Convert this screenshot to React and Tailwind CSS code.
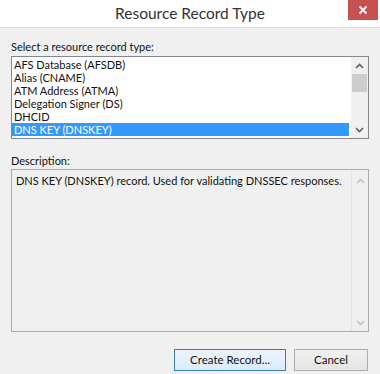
import React, { useState } from "react";

const recordTypes = [
  "AFS Database (AFSDB)",
  "Alias (CNAME)",
  "ATM Address (ATMA)",
  "Delegation Signer (DS)",
  "DHCID",
  "DNS KEY (DNSKEY)",
];

function Chevron({ up, color = "#606060" }) {
  return (
    <svg width="9" height="6" viewBox="0 0 9 6">
      <path
        d={up ? "M1 5 L4.5 1.5 L8 5" : "M1 1 L4.5 4.5 L8 1"}
        fill="none"
        stroke={color}
        strokeWidth="1.6"
      />
    </svg>
  );
}

export default function App() {
  const [selected, setSelected] = useState(5);

  return (
    <div className="w-[380px] h-[374px] bg-[#f0f0f0] text-[11px] text-[#111] font-['Lato',sans-serif] overflow-hidden">
      {/* Title bar */}
      <div className="h-[28px] bg-white border-b border-[#dadada] grid grid-cols-[1fr_auto_1fr]">
        <div />
        <div className="text-[15.5px] text-[#333] leading-[27px]">Resource Record Type</div>
        <div className="flex justify-end pr-[2px]">
          <div className="w-[30px] h-[20px] bg-[#c75050] flex items-center justify-center">
            <svg width="10" height="10" viewBox="0 0 10 10">
              <path d="M1.5 1.5 L8.5 8.5 M8.5 1.5 L1.5 8.5" stroke="#fff" strokeWidth="1.8" />
            </svg>
          </div>
        </div>
      </div>

      {/* Body */}
      <div className="px-[11px] pt-[11px]">
        <div className="leading-[15px] mb-[2px]">Select a resource record type:</div>

        {/* List box */}
        <div className="h-[83px] w-[358px] bg-white border border-[#828790] flex">
          <div className="flex-1 py-px pr-[2px]">
            {recordTypes.map((t, i) => (
              <div
                key={t}
                onClick={() => setSelected(i)}
                className={`h-[13px] leading-[13px] px-[2px] whitespace-nowrap ${
                  i === selected ? "bg-[#3399ff] text-white" : ""
                }`}
              >
                {t}
              </div>
            ))}
          </div>
          <div className="w-[17px] bg-[#f0f0f0] flex flex-col">
            <div className="h-[17px] flex items-center justify-center">
              <Chevron up />
            </div>
            <div className="h-[18px] mx-px bg-[#cdcdcd]" />
            <div className="flex-1" />
            <div className="h-[17px] flex items-center justify-center">
              <Chevron />
            </div>
          </div>
        </div>

        <div className="leading-[15px] mt-[14px] mb-px">Description:</div>

        {/* Description box */}
        <div className="h-[163px] w-[358px] border border-[#acacac] flex">
          <div className="flex-1 pl-[4px] pt-[3px] leading-[15px] whitespace-nowrap">
            DNS KEY (DNSKEY) record. Used for validating DNSSEC responses.
          </div>
          <div className="w-[17px] border-l border-[#e3e3e3] flex flex-col justify-between">
            <div className="h-[17px] flex items-center justify-center mt-[2px]">
              <Chevron up color="#c2c2c2" />
            </div>
            <div className="h-[17px] flex items-center justify-center">
              <Chevron color="#c2c2c2" />
            </div>
          </div>
        </div>

        {/* Buttons */}
        <div className="flex justify-end gap-[8px] mt-[17px] mr-px">
          <button className="w-[112px] h-[22px] border border-[#3c7fb1] bg-gradient-to-b from-[#ecf4fc] to-[#dcecfc] text-[11.5px] leading-[20px]">
            Create Record...
          </button>
          <button className="w-[74px] h-[22px] border border-[#acacac] bg-gradient-to-b from-[#f0f0f0] to-[#e5e5e5] text-[11.5px] leading-[20px]">
            Cancel
          </button>
        </div>
      </div>
    </div>
  );
}
